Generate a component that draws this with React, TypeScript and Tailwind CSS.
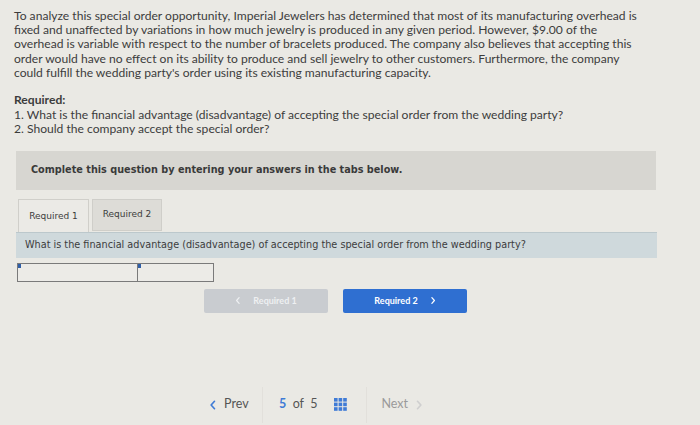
import React from 'react';

const lines = [
  'To analyze this special order opportunity, Imperial Jewelers has determined that most of its manufacturing overhead is',
  'fixed and unaffected by variations in how much jewelry is produced in any given period. However, $9.00 of the',
  'overhead is variable with respect to the number of bracelets produced. The company also believes that accepting this',
  'order would have no effect on its ability to produce and sell jewelry to other customers. Furthermore, the company',
  "could fulfill the wedding party's order using its existing manufacturing capacity.",
];

const Chevron: React.FC<{ dir: 'left' | 'right'; className?: string }> = ({ dir, className }) => (
  <svg viewBox="0 0 10 16" className={className} fill="none" stroke="currentColor" strokeWidth="2.2" strokeLinecap="round" strokeLinejoin="round">
    {dir === 'left' ? <path d="M7 3 L2.5 8 L7 13" /> : <path d="M3 3 L7.5 8 L3 13" />}
  </svg>
);

const GridIcon: React.FC = () => (
  <svg viewBox="0 0 13 13" className="w-[13px] h-[13px] text-[#3f7bd6]" fill="currentColor">
    {[0, 4.6, 9.2].map((y) =>
      [0, 4.6, 9.2].map((x) => <rect key={`${x}-${y}`} x={x} y={y} width="3.6" height="3.6" />)
    )}
  </svg>
);

export default function App() {
  return (
    <div className="w-[700px] h-[425px] bg-[#eae9e4] text-[#3b3b3b] overflow-hidden relative">
      {/* Problem text */}
      <div className="pl-[14px] pt-[9px] font-['Lato',sans-serif] text-[12.1px] leading-[14.2px] text-[#3c3c3c]">
        {lines.map((l) => (
          <div key={l} className="whitespace-nowrap">{l}</div>
        ))}
        <div className="mt-[13px] font-bold">Required:</div>
        <div className="mt-[0.5px]">1. What is the financial advantage (disadvantage) of accepting the special order from the wedding party?</div>
        <div className="mt-[0.5px]">2. Should the company accept the special order?</div>
      </div>

      {/* Instruction box */}
      <div className="ml-[16px] mt-[14px] w-[640px] h-[39px] bg-[#d7d6d1] flex items-center pl-[15px] font-['DejaVu_Sans',sans-serif] text-[9.7px] font-bold text-[#3a3a3a]">
        Complete this question by entering your answers in the tabs below.
      </div>

      {/* Tabs */}
      <div className="ml-[18px] mt-[9px] flex gap-[3px] font-['DejaVu_Sans',sans-serif] text-[9px] text-[#3c3c3c]">
        <div className="w-[71px] h-[33px] pt-[2px] flex items-center justify-center bg-[#ebeae6] border border-[#d0cfca] border-b-0">Required 1</div>
        <div className="w-[70px] h-[32px] flex items-center justify-center bg-[#dddcd7] border border-[#cfcec9]">Required 2</div>
      </div>

      {/* Question bar */}
      <div className="ml-[16px] w-[641px] h-[26px] bg-[#cfd9dc] border-t border-[#bcc8cc] flex items-center pl-[9px] font-['DejaVu_Sans',sans-serif] text-[9.7px] text-[#3c3c3c]">
        What is the financial advantage (disadvantage) of accepting the special order from the wedding party?
      </div>

      {/* Inputs */}
      <div className="ml-[17px] mt-[5px] flex">
        <div className="relative w-[121px] h-[19px] border border-[#7a7a7a] bg-[#ecebe7]">
          <div className="absolute left-0 top-0 w-[3px] h-[4px] bg-[#2f5fa8]" />
        </div>
        <div className="relative w-[76px] h-[19px] border border-l-0 border-[#7a7a7a] bg-[#ecebe7]">
          <div className="absolute left-0 top-0 w-[3px] h-[4px] bg-[#2f5fa8]" />
        </div>
      </div>

      {/* Required nav buttons */}
      <div className="ml-[204px] mt-[7px] flex gap-[15px] font-['Lato',sans-serif] text-[9px] font-bold">
        <div className="w-[124px] h-[24px] rounded-[2px] bg-[#c9ccd0] text-[#eef0f2] flex items-center justify-center gap-[12px]">
          <Chevron dir="left" className="w-[6px] h-[9px]" />
          <span>Required 1</span>
        </div>
        <div className="w-[124px] h-[24px] rounded-[2px] bg-[#2f6fd1] text-white flex items-center justify-center gap-[12px]">
          <span>Required 2</span>
          <Chevron dir="right" className="w-[6px] h-[9px]" />
        </div>
      </div>

      {/* Pagination */}
      <div className="ml-[195px] mt-[74px] h-[36px] flex items-center font-['Lato',sans-serif] text-[12.5px]">
        <div className="w-[68px] h-full flex items-center pl-[14px] gap-[7px] border-r border-[#e2e0db] text-[#555]">
          <Chevron dir="left" className="w-[8px] h-[12px] text-[#3f7bd6]" />
          <span>Prev</span>
        </div>
        <div className="h-full flex items-center pl-[16px] pr-[19px] gap-[17px] border-r border-[#e2e0db]">
          <span className="text-[#555] whitespace-pre">
            <span className="text-[#3f7bd6] font-bold">5</span>{'  of  5'}
          </span>
          <GridIcon />
        </div>
        <div className="h-full flex items-center pl-[14px] gap-[7px] text-[#9a9a9a]">
          <span>Next</span>
          <Chevron dir="right" className="w-[8px] h-[12px] text-[#cfcfcf]" />
        </div>
      </div>
    </div>
  );
}
